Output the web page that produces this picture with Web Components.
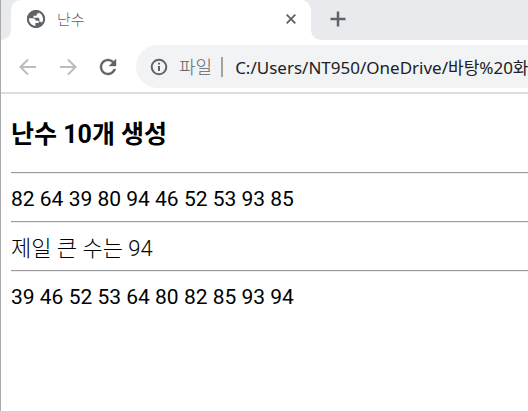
<!DOCTYPE html>
<html lang="ko">
<head>
<meta charset="utf-8">
<title>난수</title>
<style>
html,body{margin:0;height:100%;background:#fff;overflow:hidden}
body{font-family:"Noto Sans","Noto Sans CJK KR",sans-serif}
</style>
</head>
<body>
<browser-window>
  <tab-strip slot="tabs"><browser-tab>난수</browser-tab></tab-strip>
  <tool-bar slot="toolbar"><address-bar scheme="파일" url="C:/Users/NT950/OneDrive/바탕%20화면"></address-bar></tool-bar>
  <random-page></random-page>
</browser-window>
<script>
const define = (name, html, setup) => customElements.define(name, class extends HTMLElement {
  constructor() {
    super();
    this.attachShadow({mode: "open"}).innerHTML =
      `<style>*{box-sizing:border-box}button{border:0;padding:0;margin:0;background:none;display:grid;place-items:center;flex:none}svg{display:block}</style>` + html;
  }
  connectedCallback() { if (setup) setup(this, this.shadowRoot); }
});

define("browser-window", `
<style>:host{display:flex;flex-direction:column;min-height:100vh;border-left:1px solid #a9a9a9;box-sizing:border-box}</style>
<slot name="tabs"></slot><slot name="toolbar"></slot><slot></slot>`);

define("tab-strip", `
<style>
:host{display:flex;height:40px;background:#fff}
.side{background:#e8eaed}
.before{width:10px;flex:none;border-bottom-right-radius:10px}
.after{flex:1;border-bottom-left-radius:10px;padding-left:16px;display:flex;align-items:center}
.mid{flex:none;background:#e8eaed}
button{width:22px;height:22px;margin-bottom:3px}
</style>
<div class="side before"></div><div class="mid"><slot></slot></div>
<div class="side after"><button aria-label="새 탭"><svg width="16" height="16" viewBox="0 0 16 16"><path d="M8 .5v15M.5 8h15" stroke="#5f6368" stroke-width="2.500"/></svg></button></div>`);

define("browser-tab", `
<style>
:host{display:flex;align-items:center;width:300px;height:40px;padding:0 11px 3px 16px;box-sizing:border-box;background:#fff;border-radius:10px 10px 0 0;color:#5f6368;font-size:15px;font-weight:300;line-height:20px}
span{flex:1;padding-left:12px}
button{width:18px;height:18px}
</style>
<svg width="18" height="18" viewBox="2 2 20 20"><circle cx="12" cy="12" r="9" fill="none" stroke="#5f6368" stroke-width="2"/><path fill="#5f6368" d="M12 2C6.480 2 2 6.480 2 12c0 5.520 4.480 10 10 10s10-4.480 10-10S17.520 2 12 2zM4 12c0-.3 0-.6.1-.9h4.300c2.400 0 3.300 1.200 3.300 2.900H15v2.500h-3.700v3.500C7.300 20 4 16.200 4 12zm16 0c0 1.700-.5 3.200-1.400 4.500-.3-.9-1-1.500-1.900-1.500h-.9v-2.600c0-1-.8-1.700-1.700-1.700H9.200V8.500h2.500c.9 0 1.300-.7 1.300-1.400V5.900h2V4.600c3 1.200 5 4 5 7.400z"/></svg>
<span><slot></slot></span>
<button aria-label="탭 닫기"><svg width="10" height="10" viewBox="0 0 10 10"><path d="M.7.7l8.600 8.600M9.300.7L.7 9.300" stroke="#5f6368" stroke-width="1.900"/></svg></button>`);

define("tool-bar", `
<style>
:host{display:flex;align-items:center;height:54px;padding:5px 0 4px 15px;border-bottom:2px solid #dcdcdc;box-sizing:border-box;background:#fff}
button{width:24px;height:24px;margin-right:16px}
slot{display:block;flex:1;min-width:0}
</style>
<button aria-label="뒤로" disabled><svg width="24" height="24" viewBox="0 0 24 24"><path d="M20 12H5.500M12 4.500L4.500 12l7.500 7.500" fill="none" stroke="#babcbe" stroke-width="2"/></svg></button>
<button aria-label="앞으로" disabled><svg width="24" height="24" viewBox="0 0 24 24"><path d="M4 12h14.500M12 4.500l7.500 7.500-7.500 7.500" fill="none" stroke="#babcbe" stroke-width="2"/></svg></button>
<button aria-label="새로고침"><svg width="24" height="24" viewBox="0 0 24 24"><path fill="#5f6368" stroke="#5f6368" stroke-width=".4" d="M17.650 6.350C16.200 4.900 14.210 4 12 4c-4.420 0-7.990 3.580-7.990 8s3.570 8 7.990 8c3.730 0 6.840-2.550 7.730-6h-2.080c-.82 2.330-3.040 4-5.650 4-3.310 0-6-2.690-6-6s2.690-6 6-6c1.660 0 3.140.69 4.220 1.780L13 11h7V4l-2.350 2.350z"/></svg></button>
<slot></slot>`);

define("address-bar", `
<style>
:host{display:flex;align-items:center;height:43px;padding-left:13px;background:#f1f3f4;border-radius:22px 0 0 22px;font-size:17px;line-height:24px}
label{color:#5f6368;font-size:18px;font-weight:300;margin-left:10px;padding-right:9px;border-right:2px solid #a0a3a6;line-height:20px;white-space:nowrap}
input{flex:1;min-width:0;height:28px;border:0;padding:0;margin-left:12px;background:none;font:inherit;color:#202124;outline:0}
button{width:20px;height:20px}
</style>
<button aria-label="사이트 정보 보기"><svg width="18" height="18" viewBox="0 0 18 18"><circle cx="9" cy="9" r="7.300" fill="none" stroke="#5f6368" stroke-width="2"/><path d="M9 4.800v1.800M9 8v5" stroke="#5f6368" stroke-width="2"/></svg></button>
<label for="u"></label><input id="u" type="text" spellcheck="false">`,
(host, root) => {
  root.querySelector("label").textContent = host.getAttribute("scheme");
  root.querySelector("input").value = host.getAttribute("url");
});

define("random-page", `
<style>
:host{display:block;flex:1;padding:24px 0 10px 10px;background:#fff;color:#000;font-family:Roboto,"Noto Sans CJK KR",sans-serif;font-size:21px;line-height:27px}
h3{font-size:25px;line-height:34px;margin:0 0 20px}
hr{margin:0;border:0;border-top:1px solid #9a9a9a;border-bottom:1px solid #eee}
p{margin:0;padding:12px 0 8px}
.max{font-size:22px;font-weight:300}
</style>
<h3>난수 10개 생성</h3>
<hr><p>82 64 39 80 94 46 52 53 93 85</p>
<hr><p class="max">제일 큰 수는 94</p>
<hr><p>39 46 52 53 64 80 82 85 93 94</p>`);
</script>
</body>
</html>
